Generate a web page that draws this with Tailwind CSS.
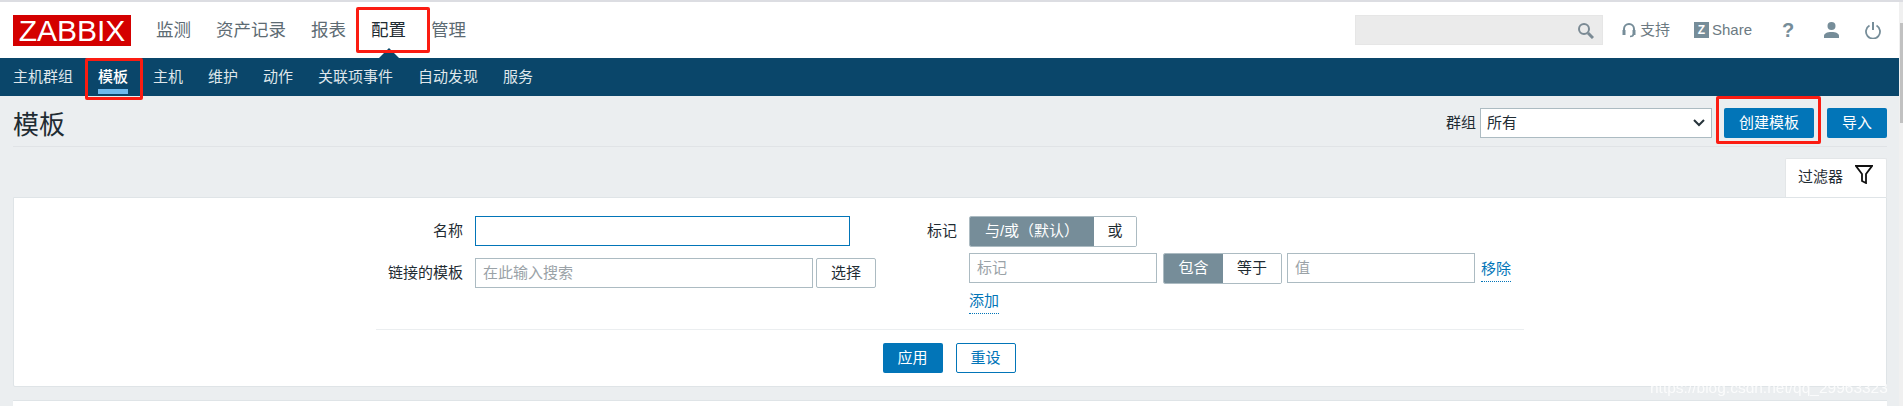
<!DOCTYPE html>
<html lang="zh">
<head>
<meta charset="utf-8">
<script src="https://cdn.jsdelivr.net/npm/@tailwindcss/browser@4"></script>
<title>模板</title>
</head>
<body class="relative h-[406px] w-[1903px] overflow-hidden bg-[#ebeef0] font-['Liberation_Sans','Noto_Sans_CJK_SC',sans-serif] text-[15px] text-[#1f2c33]">
<div class="h-[2px] bg-[#dcdde2]"></div>
<header class="flex h-[56px] items-start bg-white pl-[13px] pr-[21px]">
  <div class="mt-[13px] flex h-[31px] w-[118px] items-center justify-center bg-[#d40000] text-[30px] leading-none text-white">ZABBIX</div>
  <nav class="ml-[25px] mt-[13px] flex gap-[25px] text-[17.5px] leading-[30px] text-[#5d6b73]">
    <a>监测</a><a>资产记录</a><a>报表</a><a class="text-[#1f2c33]">配置</a><a>管理</a>
  </nav>
  <div class="ml-auto mt-[13px] flex items-start">
    <div class="flex h-[30px] w-[248px] items-center justify-end border border-[#e6e6e6] bg-[#ebebeb] pr-[8px]">
      <svg class="h-[17px] w-[17px]" viewBox="0 0 17 17" fill="none" stroke="#7b8a94" stroke-width="2"><circle cx="7" cy="7" r="5"/><path d="M11 11l5 5" stroke-width="3"/></svg>
    </div>
    <a class="ml-[19px] flex h-[30px] items-center gap-[4px] text-[15px] text-[#6c7a82]">
      <svg class="h-[16px] w-[14px]" viewBox="0 0 14 16" fill="none" stroke="#768d99" stroke-width="2"><path d="M2 10V7a5 5 0 0 1 10 0v3"/><rect x="0.5" y="8" width="3" height="5" fill="#768d99" stroke="none"/><rect x="10.500" y="8" width="3" height="5" fill="#768d99" stroke="none"/><path d="M11.5 12c0 2-1.5 2.500-3.500 2.500" stroke-width="1.500"/></svg>
      <span>支持</span>
    </a>
    <a class="ml-[24px] flex h-[30px] items-center gap-[3px] text-[15px] text-[#6c7a82]">
      <span class="flex h-[16px] w-[15px] items-center justify-center bg-[#768d99] text-[12px] font-bold leading-none text-white">Z</span>
      <span>Share</span>
    </a>
    <a class="ml-[29px] flex h-[30px] w-[14px] items-center justify-center text-[20px] font-bold text-[#768d99]">?</a>
    <a class="ml-[27px] flex h-[30px] w-[18px] items-center justify-center">
      <svg class="h-[16px] w-[17px]" viewBox="0 0 17 16" fill="#768d99"><circle cx="8.500" cy="4" r="4"/><path d="M1 16v-2c0-2.500 3-4 7.500-4s7.500 1.500 7.500 4v2z"/></svg>
    </a>
    <a class="ml-[24px] flex h-[30px] w-[18px] items-center justify-center">
      <svg class="h-[18px] w-[16px]" viewBox="0 0 16 18" fill="none" stroke="#768d99" stroke-width="1.800"><path d="M4.500 4.500a7 7 0 1 0 7 0"/><path d="M8 1v8" stroke-width="2"/></svg>
    </a>
  </div>
</header>
<nav class="relative flex h-[38px] items-center gap-[25px] bg-[#0a466a] pl-[13px] text-[15px] text-[#dfe6ea]">
  <span class="absolute left-[379px] top-[-10px] h-0 w-0 border-x-[10px] border-b-[10px] border-x-transparent border-b-[#0a466a]"></span>
  <a>主机群组</a>
  <a class="relative font-medium text-white">模板<span class="absolute left-0 top-[23px] h-[5px] w-full bg-[#6eb8ec]"></span></a>
  <a>主机</a><a>维护</a><a>动作</a><a>关联项事件</a><a>自动发现</a><a>服务</a>
</nav>
<main class="pl-[13px] pr-[16px]">
  <div class="flex h-[51px] items-center justify-between border-b border-[#e0e3e6] pt-[4px]">
    <h1 class="mt-[3px] text-[26px] font-normal leading-none text-[#1f2c33]">模板</h1>
    <div class="flex items-center">
      <span class="mr-[4px]">群组</span>
      <div class="flex h-[30px] w-[232px] items-center justify-between border border-[#acbbc2] bg-white pl-[6px] pr-[6px]">
        <span>所有</span>
        <svg class="h-[8px] w-[12px]" viewBox="0 0 12 8" fill="none" stroke="#27343b" stroke-width="2"><path d="M1 1l5 5 5-5"/></svg>
      </div>
      <button class="ml-[12px] h-[30px] w-[90px] rounded-[2px] bg-[#0275b8] text-white">创建模板</button>
      <button class="ml-[13px] h-[30px] w-[60px] rounded-[2px] bg-[#0275b8] text-white">导入</button>
    </div>
  </div>
  <div class="mt-[11px] flex justify-end">
    <div class="flex h-[39px] w-[102px] items-start gap-[12px] rounded-t-[2px] border border-b-0 border-[#e3e6e8] bg-white pl-[12px] pt-[8px]">
      <span class="leading-[20px]">过滤器</span>
      <svg class="mt-[-2px] h-[19px] w-[18px]" viewBox="0 0 18 19" fill="none" stroke="#111" stroke-width="1.800"><path d="M1 1h16l-6 8v9l-4-2V9z"/></svg>
    </div>
  </div>
  <section class="flex h-[190px] flex-col items-center rounded-b-[2px] border border-[#dfe4e7] bg-white pt-[18px]">
    <div class="flex h-[114px] w-[1148px] items-start">
      <div class="grid w-[500px] grid-cols-[87px_1fr] items-start gap-x-[12px] gap-y-[12px]">
        <label class="text-right leading-[30px]">名称</label>
        <div class="h-[30px] w-[375px] border border-[#0275b8] bg-white"></div>
        <label class="whitespace-nowrap text-right leading-[30px]">链接的模板</label>
        <div class="flex gap-[3px]">
          <div class="flex h-[30px] w-[338px] items-center border border-[#acbbc2] px-[7px] text-[#9aa2a7]">在此输入搜索</div>
          <button class="h-[30px] w-[60px] rounded-[2px] border border-[#acbbc2] bg-white">选择</button>
        </div>
      </div>
      <div class="ml-[51px] grid grid-cols-[30px_1fr] gap-x-[12px]">
        <label class="leading-[30px]">标记</label>
        <div class="flex flex-col items-start">
          <div class="flex h-[31px] w-[168px] overflow-hidden rounded-[2px] border border-[#acbbc2]">
            <span class="flex w-[124px] items-center justify-center whitespace-pre bg-[#768d99] text-white">与/或（默认）</span>
            <span class="flex flex-1 items-center justify-center bg-white">或</span>
          </div>
          <div class="mt-[6px] flex items-start">
            <div class="flex h-[30px] w-[188px] items-center border border-[#acbbc2] px-[7px] text-[#9aa2a7]">标记</div>
            <div class="ml-[6px] flex h-[31px] w-[119px] overflow-hidden rounded-[2px] border border-[#acbbc2]">
              <span class="flex w-[59px] items-center justify-center bg-[#768d99] text-white">包含</span>
              <span class="flex flex-1 items-center justify-center bg-white">等于</span>
            </div>
            <div class="ml-[5px] flex h-[30px] w-[188px] items-center border border-[#acbbc2] px-[7px] text-[#9aa2a7]">值</div>
            <a class="ml-[6px] mt-[3px] border-b border-dotted border-[#0275b8] leading-[25px] text-[#0275b8]">移除</a>
          </div>
          <a class="mt-[4px] border-b border-dotted border-[#0275b8] leading-[25px] text-[#0275b8]">添加</a>
        </div>
      </div>
    </div>
    <div class="flex h-[57px] w-[1148px] justify-center gap-[13px] border-t border-[#ebeef0] pt-[13px]">
      <button class="-ml-[2px] h-[30px] w-[60px] rounded-[2px] bg-[#0275b8] text-white">应用</button>
      <button class="h-[30px] w-[60px] rounded-[2px] border border-[#0275b8] bg-white text-[#0275b8]">重设</button>
    </div>
  </section>
  <div class="mt-[13px] h-[7px] border-t border-[#dfe4e7] bg-white"></div>
</main>
<!-- annotations drawn over the screenshot -->
<div class="absolute left-[356px] top-[7px] h-[46px] w-[74px] rounded-[2px] border-[3px] border-[#fb1c12]"></div>
<div class="absolute left-[85px] top-[58px] h-[42px] w-[58px] rounded-[2px] border-[3px] border-[#fb1c12]"></div>
<div class="absolute left-[1716px] top-[96px] h-[48px] w-[105px] rounded-[2px] border-[3px] border-[#fb1c12]"></div>
<!-- browser scrollbar -->
<div class="absolute right-0 top-[2px] h-[404px] w-[4px] bg-[#f0f0f0] pl-[1px]"><div class="mt-[21px] h-[100px] bg-[#c1c1c1]"></div></div>
<div class="absolute left-[1650px] top-[378px] whitespace-nowrap text-[15.500px] leading-[20px] text-white/80 blur-[0.5px]">https://blog.csdn.net/qq_29963323</div>
</body>
</html>
